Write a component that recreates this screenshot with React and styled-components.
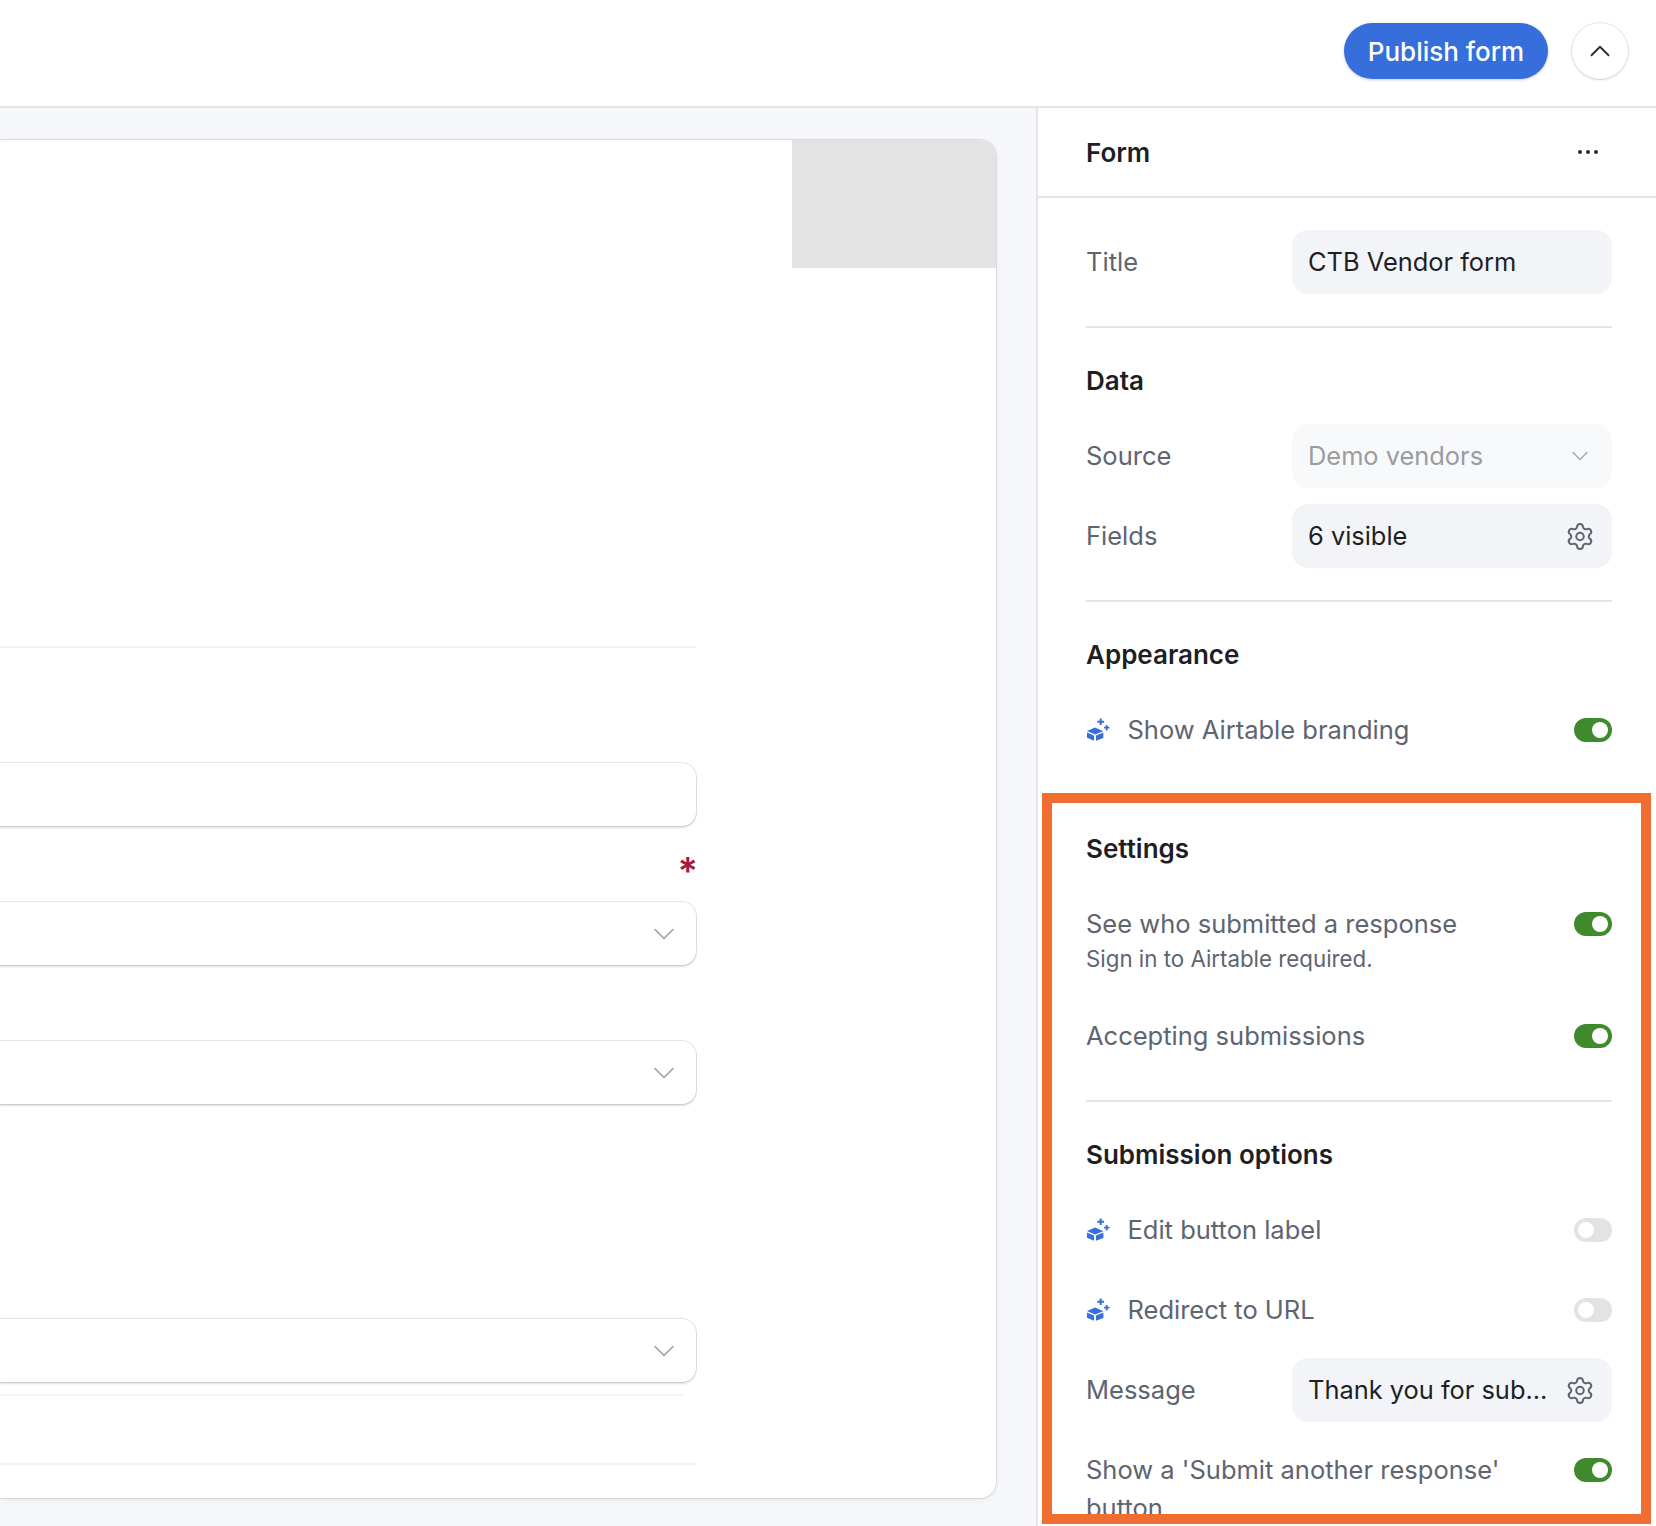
import React from 'react';
import styled, { createGlobalStyle } from 'styled-components';
import { ChevronDown, ChevronUp, Settings as GearIcon } from 'lucide-react';

const GlobalStyle = createGlobalStyle`
	html, body {
		margin: 0;
		padding: 0;
		background: #ffffff;
	}

	body {
		font-family: Inter, "Liberation Sans", sans-serif;
		-webkit-font-smoothing: antialiased;
	}

	* {
		box-sizing: border-box;
	}
`;

const Page = styled.div`
	display: flex;
	flex-direction: column;
	height: 1526px;
	overflow: hidden;
	position: relative;
	width: 1656px;
`;

const TopBar = styled.header`
	align-items: center;
	background: #ffffff;
	border-bottom: 2px solid #e4e5e7;
	display: flex;
	flex: none;
	gap: 24px;
	height: 108px;
	justify-content: flex-end;
	padding: 0 28px 4px 0;
`;

const PublishButton = styled.button`
	background: #366fdb;
	border: 0;
	border-radius: 28px;
	box-shadow: 0 1px 3px rgba(0, 0, 0, 0.2);
	color: #ffffff;
	font-family: inherit;
	font-size: 26px;
	font-weight: 500;
	height: 56px;
	padding: 0;
	width: 204px;
`;

const RoundButton = styled.button`
	align-items: center;
	background: #ffffff;
	border: 0;
	border-radius: 50%;
	box-shadow: 0 0 0 1px rgba(0, 0, 0, 0.08), 0 1px 3px rgba(0, 0, 0, 0.12);
	color: #2a2c32;
	display: flex;
	height: 56px;
	justify-content: center;
	padding: 0;
	width: 56px;
`;

const Workspace = styled.div`
	display: flex;
	flex: 1;
	min-height: 0;
`;

const Canvas = styled.main`
	background: #f6f7fb;
	flex: none;
	padding-top: 32px;
	width: 1036px;
`;

const FormCard = styled.section`
	background: #ffffff;
	border-radius: 0 16px 16px 0;
	box-shadow: 0 0 0 1px rgba(0, 0, 0, 0.09), 0 2px 6px rgba(0, 0, 0, 0.06);
	overflow: hidden;
	padding-bottom: 33px;
	width: 996px;
`;

const CoverBand = styled.div`
	background: #e3e3e3;
	height: 128px;
	margin-left: auto;
	width: 204px;
`;

const FormBody = styled.div`
	display: flex;
	flex-direction: column;
	width: 696px;
`;

const Rule = styled.hr`
	background: ${props => props.$tint || '#f2f2f2'};
	border: 0;
	height: 2px;
	margin: ${props => props.$top}px ${props => props.$inset || 0}px 0 0;
`;

const FieldBox = styled.div`
	align-items: center;
	background: #ffffff;
	border-radius: 0 14px 14px 0;
	box-shadow: 0 0 0 1px rgba(0, 0, 0, 0.1), 0 1.5px 2px rgba(0, 0, 0, 0.12);
	color: #9b9ca0;
	display: flex;
	flex: none;
	height: 63px;
	justify-content: flex-end;
	margin-top: ${props => props.$top}px;
	padding-right: 14px;
`;

const RequiredRow = styled.div`
	color: #a5183f;
	display: flex;
	font-size: 38px;
	font-weight: 600;
	height: 0;
	justify-content: flex-end;
	line-height: 40px;
	transform: translate(2px, 25px);
`;

const SidePanel = styled.aside`
	background: #ffffff;
	border-left: 2px solid #e4e5e7;
	flex: 1;
	min-width: 0;
`;

const PanelHeader = styled.div`
	align-items: center;
	border-bottom: 2px solid #e4e5e7;
	color: #1d1f25;
	display: flex;
	font-size: 26px;
	font-weight: 600;
	height: 90px;
	justify-content: space-between;
	padding: 0 58px 0 48px;
`;

const MoreDots = styled.span`
	display: flex;
	gap: 4px;

	i {
		background: #2a2c32;
		border-radius: 50%;
		display: block;
		height: 4px;
		width: 4px;
	}
`;

const PanelBody = styled.div`
	padding: 32px 44px 0 48px;
`;

const Divider = styled.hr`
	background: ${props => (props.$hidden ? 'transparent' : '#e4e5e7')};
	border: 0;
	height: 2px;
	margin: 32px 0 37px;
`;

const SectionTitle = styled.h2`
	color: #1d1f25;
	font-size: 26px;
	font-weight: 600;
	line-height: 32px;
	margin: 0 0 27px;
`;

const Rows = styled.div`
	display: flex;
	flex-direction: column;
	gap: 16px;
`;

const FieldRow = styled.div`
	align-items: center;
	display: flex;
	height: 64px;
`;

const FieldLabel = styled.span`
	color: #5e6470;
	flex: none;
	font-size: 25.5px;
	line-height: 38px;
	width: 206px;
`;

const ValueBox = styled.div`
	align-items: center;
	background: ${props => (props.$disabled ? '#f8f9fb' : '#f2f4f8')};
	border-radius: 16px;
	color: ${props => (props.$disabled ? '#9a9ca2' : '#1d1f25')};
	display: flex;
	flex: none;
	font-size: 25.4px;
	height: 64px;
	justify-content: space-between;
	line-height: 38px;
	padding: 0 17px 0 16px;
	width: 320px;
`;

const IconSlot = styled.span`
	align-items: center;
	color: ${props => props.$color};
	display: flex;
	flex: none;
	justify-content: center;
	width: 30px;
`;

const ToggleRow = styled.div`
	align-items: ${props => (props.$top ? 'flex-start' : 'center')};
	color: #5e6470;
	display: flex;
	font-size: 25.5px;
	gap: 16px;
	justify-content: space-between;
	line-height: 38px;
	min-height: 64px;
	padding: ${props => (props.$top ? '13px 0 13px' : '0')};
`;

const ToggleLabel = styled.span`
	align-items: center;
	display: flex;
	gap: 15.5px;
`;

const HelpText = styled.div`
	font-size: 22.3px;
	line-height: 32px;
`;

const Switch = styled.span`
	background: ${props => (props.$on ? '#3f8a2c' : '#e3e3e3')};
	border-radius: 12px;
	display: flex;
	flex: none;
	height: 24px;
	justify-content: ${props => (props.$on ? 'flex-end' : 'flex-start')};
	margin-top: ${props => (props.$top ? '7px' : '0')};
	padding: 4px;
	width: 38px;

	&::after {
		background: #ffffff;
		border-radius: 50%;
		content: '';
		display: block;
		height: 16px;
		width: 16px;
	}
`;

const Highlight = styled.div`
	border: 10px solid #f06f30;
	height: 731px;
	left: 1042px;
	pointer-events: none;
	position: absolute;
	top: 793px;
	width: 609px;
`;

// Airtable's "paid feature" mark, a small cube with two sparkles
const SparkleBox = () => (
	<svg width="26" height="26" viewBox="0 0 26 26" fill="#366fdb" style={{ flex: 'none' }}>
		<path d="M1 14 9 10.400l8.400 3.800-8.400 3.300z" />
		<path d="M1 15.500 8 18.500v5.300L1 20.800z" />
		<path d="M10 18.500 17.400 15.500v5.400L10 23.800z" />
		<path d="M13.700 1.400h2v2.300h2.400v2h-2.400V8h-2V5.700h-2.400v-2h2.400z" />
		<path d="M19.800 8h1.800v1.800h1.800v1.800h-1.800v1.800h-1.800v-1.800H18V9.800h1.800z" />
	</svg>
);

const Gear = () => (
	<IconSlot $color="#5e6470">
		<GearIcon size={33} strokeWidth={1.6} />
	</IconSlot>
);

const SelectChevron = () => <ChevronDown size={36} strokeWidth={1} color="#9b9ca0" />;

const App = () => {
	return (
		<Page>
			<GlobalStyle />
			<TopBar>
				<PublishButton>Publish form</PublishButton>
				<RoundButton>
					<ChevronUp size={34} strokeWidth={1.25} />
				</RoundButton>
			</TopBar>
			<Workspace>
				<Canvas>
					<FormCard>
						<CoverBand />
						<FormBody>
							<Rule $top={378} />
							<FieldBox $top={115} />
							<RequiredRow>*</RequiredRow>
							<FieldBox $top={76}>
								<SelectChevron />
							</FieldBox>
							<FieldBox $top={76}>
								<SelectChevron />
							</FieldBox>
							<FieldBox $top={215}>
								<SelectChevron />
							</FieldBox>
							<Rule $top={12} $inset={12} $tint="#f4f4fa" />
							<Rule $top={67} />
						</FormBody>
					</FormCard>
				</Canvas>
				<SidePanel>
					<PanelHeader>
						Form
						<MoreDots>
							<i />
							<i />
							<i />
						</MoreDots>
					</PanelHeader>
					<PanelBody>
						<FieldRow>
							<FieldLabel>Title</FieldLabel>
							<ValueBox>CTB Vendor form</ValueBox>
						</FieldRow>
						<Divider />

						<SectionTitle>Data</SectionTitle>
						<Rows>
							<FieldRow>
								<FieldLabel>Source</FieldLabel>
								<ValueBox $disabled>
									Demo vendors
									<IconSlot $color="#a9abb0">
										<ChevronDown size={28} strokeWidth={1.25} />
									</IconSlot>
								</ValueBox>
							</FieldRow>
							<FieldRow>
								<FieldLabel>Fields</FieldLabel>
								<ValueBox>
									6 visible
									<Gear />
								</ValueBox>
							</FieldRow>
						</Rows>
						<Divider />

						<SectionTitle>Appearance</SectionTitle>
						<ToggleRow>
							<ToggleLabel>
								<SparkleBox />
								Show Airtable branding
							</ToggleLabel>
							<Switch $on />
						</ToggleRow>
						<Divider $hidden />

						<SectionTitle>Settings</SectionTitle>
						<Rows>
							<ToggleRow $top>
								<div>
									See who submitted a response
									<HelpText>Sign in to Airtable required.</HelpText>
								</div>
								<Switch $on $top />
							</ToggleRow>
							<ToggleRow>
								Accepting submissions
								<Switch $on />
							</ToggleRow>
						</Rows>
						<Divider />

						<SectionTitle>Submission options</SectionTitle>
						<Rows>
							<ToggleRow>
								<ToggleLabel>
									<SparkleBox />
									Edit button label
								</ToggleLabel>
								<Switch />
							</ToggleRow>
							<ToggleRow>
								<ToggleLabel>
									<SparkleBox />
									Redirect to URL
								</ToggleLabel>
								<Switch />
							</ToggleRow>
							<FieldRow>
								<FieldLabel>Message</FieldLabel>
								<ValueBox>
									Thank you for sub...
									<Gear />
								</ValueBox>
							</FieldRow>
							<ToggleRow $top>
								<div>Show a 'Submit another response' button</div>
								<Switch $on $top />
							</ToggleRow>
						</Rows>
					</PanelBody>
				</SidePanel>
			</Workspace>
			<Highlight />
		</Page>
	);
};

export default App;
